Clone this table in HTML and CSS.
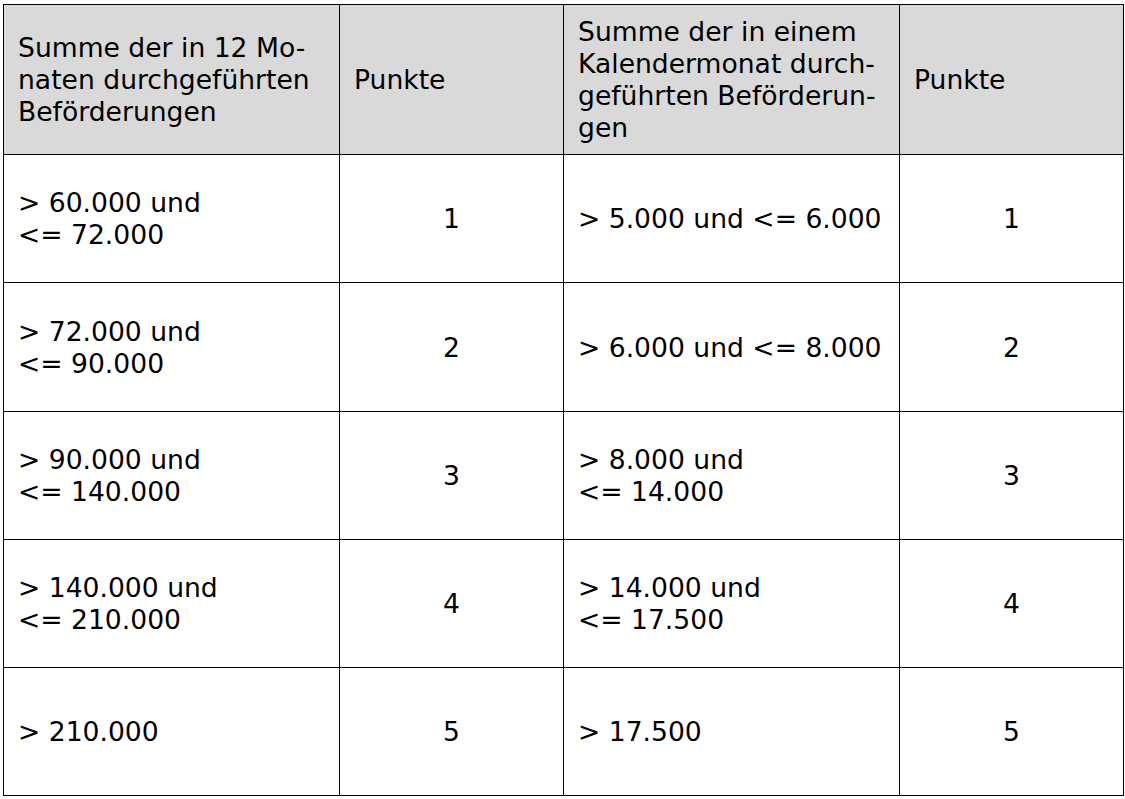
FILE: index.html
```html
<!DOCTYPE html>
<html lang="de">
<head>
<meta charset="utf-8">
<title>Punktetabelle</title>
<link rel="stylesheet" href="styles.css">
</head>
<body>
<table class="points">
  <colgroup>
    <col class="c-wide">
    <col class="c-narrow">
    <col class="c-wide">
    <col class="c-narrow">
  </colgroup>
  <thead>
    <tr class="head">
      <th>Summe der in 12 Mo-<br>naten durchgeführten<br>Beförderungen</th>
      <th>Punkte</th>
      <th>Summe der in einem<br>Kalendermonat durch-<br>geführten Beförderun-<br>gen</th>
      <th>Punkte</th>
    </tr>
  </thead>
  <tbody>
    <tr>
      <td>&gt; 60.000 und<br>&lt;= 72.000</td>
      <td class="num">1</td>
      <td>&gt; 5.000 und &lt;= 6.000</td>
      <td class="num">1</td>
    </tr>
    <tr class="tall">
      <td>&gt; 72.000 und<br>&lt;= 90.000</td>
      <td class="num">2</td>
      <td>&gt; 6.000 und &lt;= 8.000</td>
      <td class="num">2</td>
    </tr>
    <tr>
      <td>&gt; 90.000 und<br>&lt;= 140.000</td>
      <td class="num">3</td>
      <td>&gt; 8.000 und<br>&lt;= 14.000</td>
      <td class="num">3</td>
    </tr>
    <tr>
      <td>&gt; 140.000 und<br>&lt;= 210.000</td>
      <td class="num">4</td>
      <td>&gt; 14.000 und<br>&lt;= 17.500</td>
      <td class="num">4</td>
    </tr>
    <tr>
      <td>&gt; 210.000</td>
      <td class="num">5</td>
      <td>&gt; 17.500</td>
      <td class="num">5</td>
    </tr>
  </tbody>
</table>
</body>
</html>
```
FILE: styles.css
```css
html, body {
  margin: 0;
  padding: 0;
  background: #ffffff;
}

body {
  padding: 4px 0 0 3px;
  font-family: "DejaVu Sans", Verdana, sans-serif;
  font-size: 26.6px;
  line-height: 32px;
  color: #000000;
}

.points {
  border-collapse: collapse;
  table-layout: fixed;
  width: 1120px;
}

.c-wide { width: 336px; }
.c-narrow { width: 224px; }

.points th,
.points td {
  border: 1px solid #000000;
  padding: 1px 6px 0 14px;
  vertical-align: middle;
  text-align: left;
  font-weight: normal;
  white-space: nowrap;
}

.points .head th {
  background: #d9d9d9;
  height: 148px;
}

.points tbody tr {
  height: 128px;
}

.points tbody tr.tall {
  height: 129px;
}

.points td.num {
  text-align: center;
  padding: 1px 0 0 0;
}
```
